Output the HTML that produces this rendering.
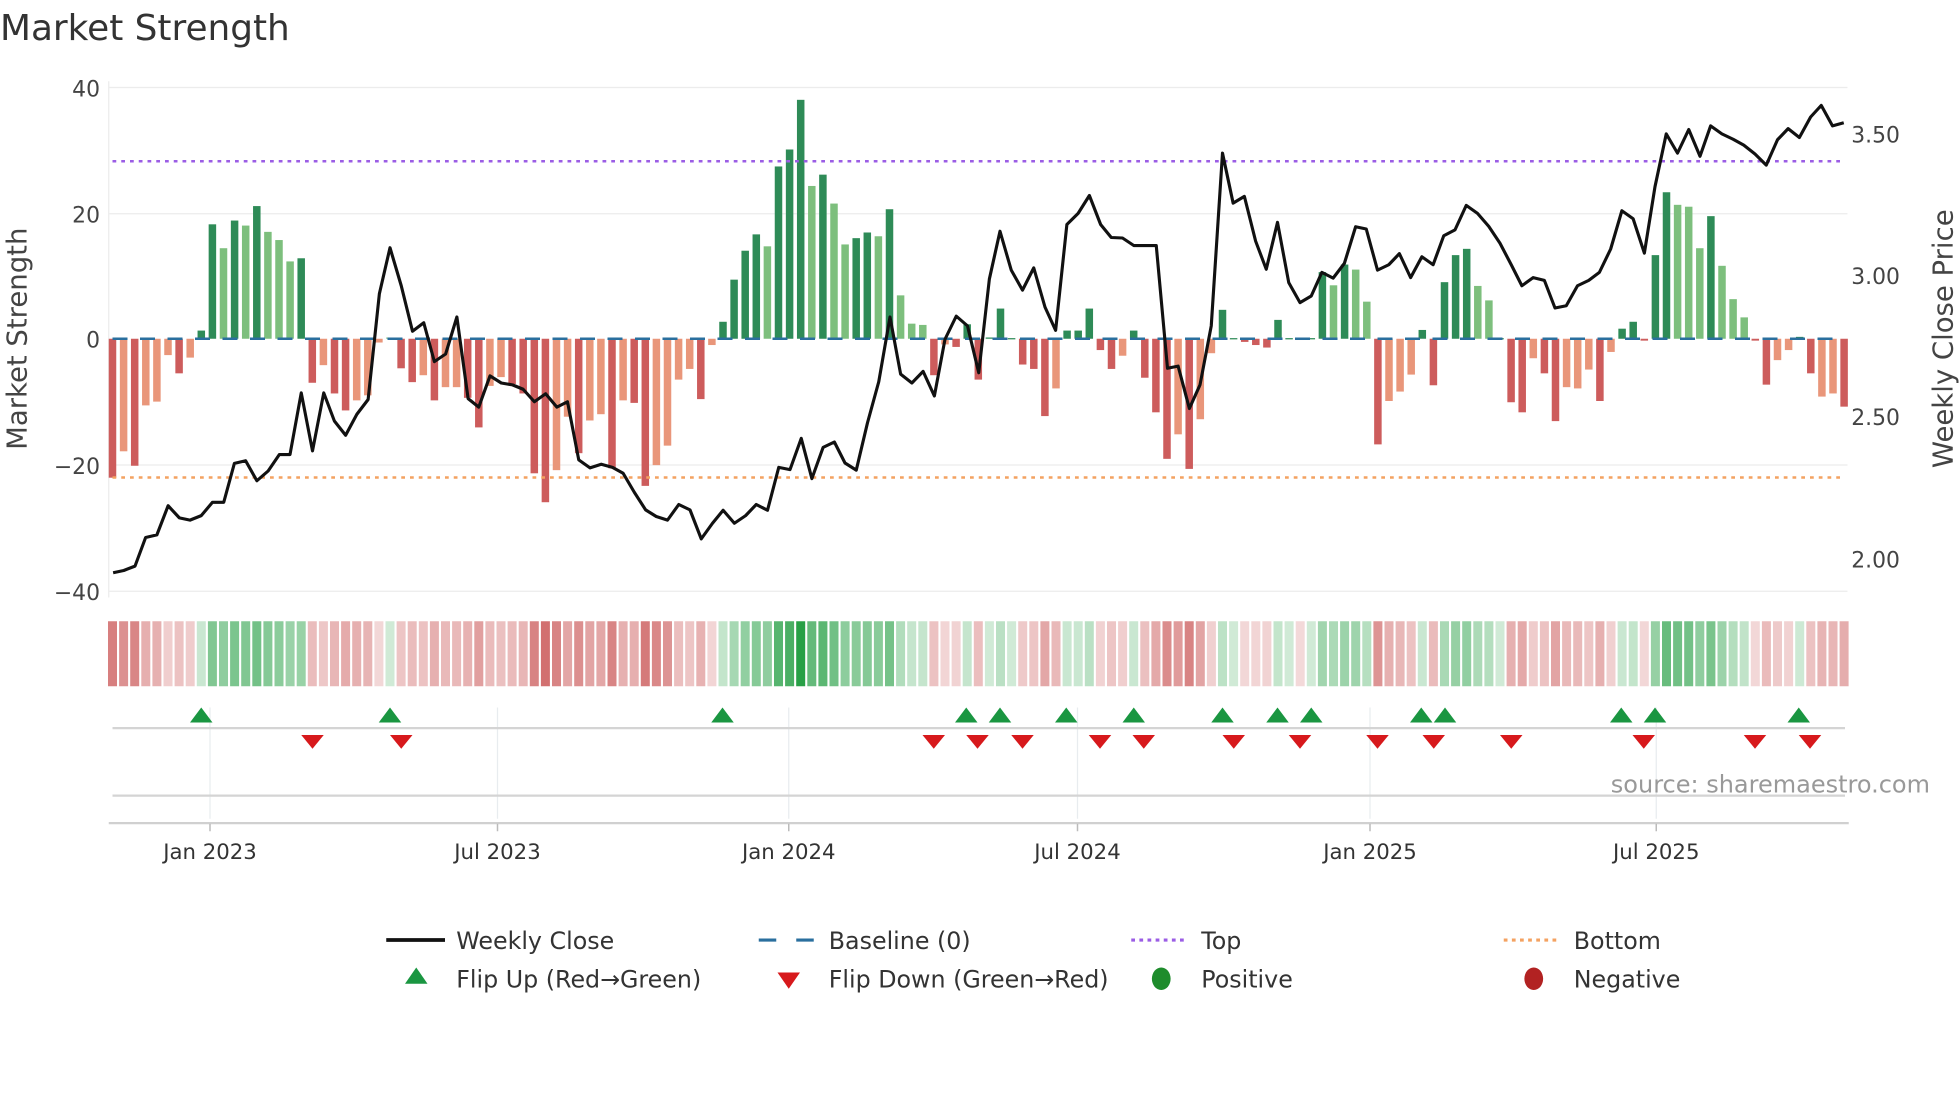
<!DOCTYPE html>
<html><head><meta charset="utf-8"><style>
html,body{margin:0;padding:0;background:#fff;width:1960px;height:1102px;overflow:hidden}
svg text{font-family:"DejaVu Sans","Liberation Sans",sans-serif}
</style></head><body>
<svg id="s" width="1960" height="1102" viewBox="0 0 1568 881.6" xmlns="http://www.w3.org/2000/svg">
<rect width="1568" height="882" fill="#fff"/>
<text x="0" y="32" font-size="28.7" fill="#333">Market Strength</text>
<g stroke="#ececec" stroke-width="1">
<line x1="87" x2="1478" y1="70" y2="70"/><line x1="87" x2="1478" y1="171" y2="171"/><line x1="87" x2="1478" y1="372" y2="372"/><line x1="87" x2="1478" y1="473" y2="473"/>
<line x1="87" x2="87" y1="65" y2="478"/>
</g>
<g font-size="17.5" fill="#444" text-anchor="end">
<text x="80" y="77">40</text><text x="80" y="178">20</text><text x="80" y="278">0</text><text x="80" y="379">−20</text><text x="80" y="480">−40</text>
</g>
<g font-size="17.5" fill="#444">
<text x="1481" y="114">3.50</text><text x="1481" y="227">3.00</text><text x="1481" y="340">2.50</text><text x="1481" y="454">2.00</text>
</g>
<text transform="translate(21,271) rotate(-90)" font-size="22" fill="#444" text-anchor="middle">Market Strength</text>
<text transform="translate(1562,271) rotate(-90)" font-size="22" fill="#444" text-anchor="middle">Weekly Close Price</text>
<g id="bars"></g>
<line x1="90" x2="1476" y1="129" y2="129" stroke="#9b5de5" stroke-width="2" stroke-dasharray="3,4"/>
<line x1="90" x2="1476" y1="382" y2="382" stroke="#f4a261" stroke-width="2" stroke-dasharray="3,4"/>
<line x1="90" x2="1476" y1="271" y2="271" stroke="#2a6f9e" stroke-width="2" stroke-dasharray="12,10"/>
<polyline id="ln" fill="none" stroke="#111" stroke-width="2.5" stroke-linejoin="round"/>
<g id="heat"></g>
<g stroke="#e8ecef" stroke-width="1">
<line x1="168" x2="168" y1="566" y2="655"/><line x1="398" x2="398" y1="566" y2="655"/><line x1="631" x2="631" y1="566" y2="655"/><line x1="862" x2="862" y1="566" y2="655"/><line x1="1096" x2="1096" y1="566" y2="655"/><line x1="1325" x2="1325" y1="566" y2="655"/>
</g>
<line x1="90" x2="1476" y1="582.5" y2="582.5" stroke="#d4d4d4" stroke-width="1.8"/>
<line x1="90" x2="1476" y1="636.5" y2="636.5" stroke="#d4d4d4" stroke-width="1.8"/>
<line x1="87" x2="1479" y1="658.5" y2="658.5" stroke="#d0d0d0" stroke-width="1.8"/>
<g stroke="#bbb" stroke-width="1.2"><line x1="168" x2="168" y1="659" y2="665"/><line x1="398" x2="398" y1="659" y2="665"/><line x1="631" x2="631" y1="659" y2="665"/><line x1="862" x2="862" y1="659" y2="665"/><line x1="1096" x2="1096" y1="659" y2="665"/><line x1="1325" x2="1325" y1="659" y2="665"/></g>
<g id="mk"></g>
<text x="1544" y="634" font-size="19.2" fill="#999" text-anchor="end">source: sharemaestro.com</text>
<g font-size="17" fill="#333" text-anchor="middle">
<text x="168" y="687">Jan 2023</text><text x="398" y="687">Jul 2023</text><text x="631" y="687">Jan 2024</text><text x="862" y="687">Jul 2024</text><text x="1096" y="687">Jan 2025</text><text x="1325" y="687">Jul 2025</text>
</g>
<g font-size="19" fill="#333">
<line x1="309" x2="356" y1="752" y2="752" stroke="#111" stroke-width="3"/><text x="365" y="759">Weekly Close</text>
<line x1="607" x2="651" y1="752" y2="752" stroke="#2a6f9e" stroke-width="2.5" stroke-dasharray="14,16"/><text x="663" y="759">Baseline (0)</text>
<line x1="905" x2="948" y1="752" y2="752" stroke="#9b5de5" stroke-width="2.5" stroke-dasharray="3,3.5"/><text x="961" y="759">Top</text>
<line x1="1203" x2="1247" y1="752" y2="752" stroke="#f4a261" stroke-width="2.5" stroke-dasharray="3,3.5"/><text x="1259" y="759">Bottom</text>
<polygon points="333,774 342,787 324,787" fill="#1a9641"/><text x="365" y="790">Flip Up (Red→Green)</text>
<polygon points="622,778 640,778 631,791" fill="#d7191c"/><text x="663" y="790">Flip Down (Green→Red)</text>
<ellipse cx="929" cy="783" rx="7.5" ry="9" fill="#1e8c2c"/><text x="961" y="790">Positive</text>
<ellipse cx="1227" cy="783" rx="7.5" ry="9" fill="#b22222"/><text x="1259" y="790">Negative</text>
</g>
</svg>
<script>
var NS="http://www.w3.org/2000/svg";
function el(p,t,a){var e=document.createElementNS(NS,t);for(var k in a)e.setAttribute(k,a[k]);p.appendChild(e);return e;}
var V=[[-22.1,1],[-17.9,0],[-20.2,1],[-10.6,0],[-10,0],[-2.6,0],[-5.5,1],[-3,0],[1.3,1],[18.2,1],[14.4,0],[18.8,1],[18,0],[21.1,1],[17,0],[15.7,0],[12.3,0],[12.8,1],[-7,1],[-4.2,0],[-8.7,1],[-11.4,1],[-9.8,0],[-9,0],[-0.6,0],[0.2,0],[-4.7,1],[-6.9,1],[-5.8,0],[-9.8,1],[-7.7,0],[-7.7,0],[-9.4,1],[-14.1,1],[-7.5,0],[-6.1,0],[-7.2,1],[-8.7,1],[-21.4,1],[-26,1],[-20.9,0],[-12.4,0],[-18.2,1],[-13,0],[-12,0],[-20.6,1],[-9.8,0],[-10.2,1],[-23.4,1],[-20.1,0],[-17,0],[-6.5,0],[-4.8,0],[-9.6,1],[-1,0],[2.7,1],[9.4,1],[14,1],[16.6,1],[14.7,0],[27.4,1],[30.1,1],[38,1],[24.3,0],[26.1,1],[21.5,0],[15,0],[16,1],[16.9,1],[16.3,0],[20.6,1],[6.9,0],[2.4,0],[2.2,0],[-5.8,1],[-0.9,0],[-1.3,1],[2.3,1],[-6.5,1],
[0.2,1],[4.8,1],[0.1,1],[-4.1,1],[-4.8,1],[-12.3,1],[-7.9,0],[1.3,1],[1.3,1],[4.8,1],[-1.8,1],[-4.8,1],[-2.7,0],[1.3,1],[-6.2,1],[-11.7,1],[-19.1,1],[-15.2,0],[-20.7,1],[-12.8,0],[-2.3,0],[4.6,1],[0.1,1],[-0.5,1],[-1,1],[-1.4,1],[3,1],[0.1,1],[-0.2,1],[0.1,1],[10.6,1],[8.5,0],[11.8,1],[11,0],[5.9,0],[-16.8,1],[-9.9,0],[-8.4,0],[-5.7,0],[1.4,1],[-7.4,1],[9,1],[13.3,1],[14.3,1],[8.4,0],[6.1,0],[0.1,1],[-10.1,1],[-11.7,1],[-3.1,0],[-5.5,1],[-13.1,1],[-7.7,0],[-7.9,0],[-4.9,0],[-9.9,1],[-2.1,0],[1.6,1],[2.7,1],[-0.3,1],[13.3,1],[23.3,1],[21.3,0],[21,0],[14.4,0],[19.5,1],[11.6,0],[6.3,0],[3.4,0],[-0.3,1],[-7.3,1],[-3.4,0],[-1.8,0],[0.3,1],[-5.5,1],[-9.2,0],[-8.7,0],[-10.8,1]];
var bars=document.getElementById('bars'),heat=document.getElementById('heat');
for(var i=0;i<V.length;i++){
 var x=90+8.88*i,v=V[i][0],d=V[i][1];
 var h=Math.abs(v)*5.03,y=v>=0?271-h:271;
 var c=v>=0?(d?'#2e8b57':'#7dbf7d'):(d?'#cd5c5c':'#e9967a');
 if(h<1)h=1;
 el(bars,'rect',{x:x-3,y:y,width:6,height:h,fill:c});
 var col;
 if(v>=0){var a=0.22+0.78*Math.min(1,v/38);col='rgba(40,160,70,'+a.toFixed(2)+')';}
 else{var a=0.22+0.6*Math.min(1,-v/26);col='rgba(200,80,80,'+a.toFixed(2)+')';}
 el(heat,'rect',{x:x-3.6,y:497,width:7.2,height:52,fill:col});
}
var L1=[[181,1283],[198,1278],[216,1268],[233,1204],[251,1198],[269,1133],[287,1160],[304,1165],[322,1155],[340,1125],[358,1125],[375,1038],[393,1032],[411,1077],[429,1055],[447,1018],[464,1018],[482,880],[500,1010],[518,880],[535,943],[553,975],[571,928],[589,895],[607,658],[624,555],[642,640],[660,742],[678,723],[695,810],[713,793],[731,710],[749,893],[766,912],[784,842],[802,858],[820,862],[837,872],[855,900],[873,882],[891,912],[908,900],[926,1030],[944,1048],[962,1040],[980,1047],[997,1060],[1015,1103],[1033,1142],[1050,1157],[1068,1165],[1086,1130],[1104,1142],[1122,1207],[1140,1172],[1157,1143],[1175,1172],[1193,1155],[1210,1130],[1228,1143],[1246,1047],[1264,1052],[1282,982],[1299,1072],[1317,1002],[1335,990],[1352,1037],[1370,1053],[1388,947],[1406,855],[1424,710],[1441,838],[1459,858],[1477,832],[1495,887],[1512,760],[1530,708],[1548,730],[1566,835]];
var L2=[[15,625],[32,518],[50,605],[68,650],[86,600],[104,688],[121,740],[139,503],[157,478],[175,438],[193,503],[210,532],[228,533],[246,550],[264,550],[282,550],[300,825],[317,820],[335,915],[352,862],[370,730],[388,343],[405,455],[423,440],[441,540],[458,603],[476,498],[494,633],[512,678],[530,663],[547,610],[565,623],[583,590],[601,508],[618,513],[636,605],[654,593],[671,568],[689,622],[707,575],[725,593],[742,528],[760,515],[778,460],[796,478],[814,507],[832,545],[850,593],[867,640],[885,622],[903,628],[920,690],[938,685],[956,640],[974,628],[991,610],[1009,558],[1027,472],[1045,490],[1063,567],[1080,418],[1098,300],[1116,343],[1134,290],[1152,350],[1169,282],[1187,300],[1205,312],[1222,325],[1240,345],[1258,370],[1276,313],[1293,288],[1311,308],[1329,262],[1346,236],[1364,282],[1382,275]];
var pts=[];
L1.forEach(function(p){pts.push((p[0]/2).toFixed(1)+','+(p[1]/2.8).toFixed(1));});
L2.forEach(function(p){pts.push((p[0]/2+784).toFixed(1)+','+(p[1]/2.8).toFixed(1));});
document.getElementById('ln').setAttribute('points',pts.join(' '));
var mk=document.getElementById('mk');
[161,312,578,773,800,853,907,978,1022,1049,1137,1156,1297,1324,1439].forEach(function(x){el(mk,'polygon',{points:x+',566 '+(x+9)+',578 '+(x-9)+',578',fill:'#1a9641'});});
[250,321,747,782,818,880,915,987,1040,1102,1147,1209,1315,1404,1448].forEach(function(x){el(mk,'polygon',{points:(x-9)+',588 '+(x+9)+',588 '+x+',599',fill:'#d7191c'});});
</script>
</body></html>
